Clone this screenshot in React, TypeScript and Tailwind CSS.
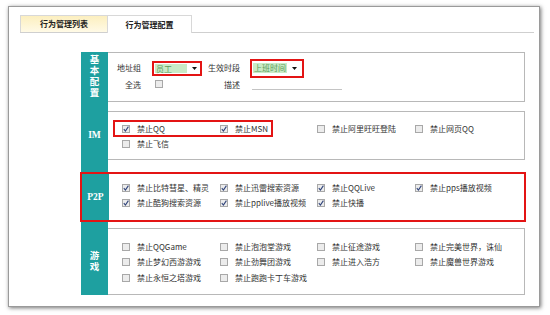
import type { ReactNode } from 'react';

const TEAL = 'bg-[#1ea0a0]';

function Box({ checked }: { checked?: boolean }) {
  return (
    <span className="relative inline-block w-[8px] h-[8px] border border-[#a8a8a8] bg-[#ececec] shrink-0">
      {checked && (
        <svg viewBox="0 0 8 8" className="absolute -left-px -top-px w-[8px] h-[8px]">
          <path d="M1.8 4.2 L3.4 6 L6.4 1.6" fill="none" stroke="#30447a" strokeWidth="1.1" />
        </svg>
      )}
    </span>
  );
}

function Arrow() {
  return (
    <svg viewBox="0 0 5 3" className="ml-[5px] w-[5px] h-[3px]">
      <path d="M0 0 H5 L2.5 3 Z" fill="#111" />
    </svg>
  );
}

function Item({ label, checked }: { label: string; checked?: boolean }) {
  return (
    <div className="flex items-center h-[15.5px]">
      <Box checked={checked} />
      <span className="ml-[7px] whitespace-nowrap">{label}</span>
    </div>
  );
}

function Label({ children }: { children: ReactNode }) {
  return (
    <div className={`w-[27px] shrink-0 ${TEAL} flex flex-col items-center justify-center text-white font-bold text-[9.5px] leading-[11px] font-['Liberation_Serif','Noto_Sans_CJK_SC',serif]`}>
      {children}
    </div>
  );
}

function Gap({ h }: { h: string }) {
  return (
    <div className={`flex ${h}`}>
      <div className={`w-[27px] ${TEAL}`} />
      <div className="flex-1" />
    </div>
  );
}

const im = [
  { label: '禁止QQ', checked: true },
  { label: '禁止MSN', checked: true },
  { label: '禁止阿里旺旺登陆' },
  { label: '禁止网页QQ' },
  { label: '禁止飞信' },
];

const p2p = [
  '禁止比特彗星、精灵',
  '禁止迅雷搜索资源',
  '禁止QQLive',
  '禁止pps播放视频',
  '禁止酷狗搜索资源',
  '禁止pplive播放视频',
  '禁止快播',
];

const games = [
  '禁止QQGame',
  '禁止泡泡堂游戏',
  '禁止征途游戏',
  '禁止完美世界，诛仙',
  '禁止梦幻西游游戏',
  '禁止劲舞团游戏',
  '禁止进入浩方',
  '禁止魔兽世界游戏',
  '禁止永恒之塔游戏',
  '禁止跑跑卡丁车游戏',
];

const cols = 'grid grid-cols-[98px_97px_98px_auto]';

export default function App() {
  return (
    <div className="w-[550px] h-[315px] bg-white pt-[6px] pl-[8px] font-['Noto_Sans_CJK_SC',sans-serif] text-[8px] text-[#333]">
      <div className="w-[532px] h-[301px] bg-white border border-[#9a9a9a] shadow-[1px_1px_4px_rgba(0,0,0,0.55)] pt-[8px] pl-[11px] pr-[5px]">
        {/* tabs */}
        <div className="flex h-[18px] border-b border-[#cfcfcf] font-bold text-[#222]">
          <div className="w-[87px] flex items-center justify-center border-t border-l border-[#d8d8d8] bg-[linear-gradient(#fcefbf,#fffae6)]">
            行为管理列表
          </div>
          <div className="w-[85px] flex items-center justify-center border-t border-r border-l border-[#d8d8d8] bg-white -mb-px">
            行为管理配置
          </div>
        </div>

        <div className="ml-[61px] mt-[19px] w-[444px] flex flex-col">
          {/* 基本配置 */}
          <div className="flex h-[50px]">
            <Label>
              <span>基</span>
              <span>本</span>
              <span>配</span>
              <span>置</span>
            </Label>
            <div className="flex-1 border-t border-r border-b border-[#b8b8b8] pt-[6px]">
              <div className="flex items-center h-[18px]">
                <span className="w-[33px] text-right">地址组</span>
                <div className="ml-[11px] w-[50px] h-[15px] border-2 border-[#e31414] flex items-center px-[1px]">
                  <span className="w-[32px] h-[9px] bg-[#c9eac6] text-[#5a9a5a] leading-[9px] pl-[1px]">员工</span>
                  <Arrow />
                </div>
                <span className="w-[38px] text-right">生效时段</span>
                <div className="ml-[10px] w-[54px] h-[19px] border-2 border-[#e31414] flex items-center px-[1px]">
                  <span className="w-[34px] h-[10px] bg-[#c9eac6] text-[#5a9a5a] leading-[10px] pl-[1px] whitespace-nowrap">上班时间</span>
                  <Arrow />
                </div>
              </div>
              <div className="flex items-center h-[15px]">
                <span className="w-[33px] text-right">全选</span>
                <span className="ml-[14px]">
                  <Box />
                </span>
                <span className="w-[77px] text-right">描述</span>
                <span className="ml-[12px] w-[90px] h-[10px] border-b border-[#c4c4c4]" />
              </div>
            </div>
          </div>

          <Gap h="h-[9px]" />

          {/* IM */}
          <div className="flex h-[49px]">
            <Label>IM</Label>
            <div className="relative flex-1 border-t border-r border-b border-[#b8b8b8] pt-[9px] pl-[14px]">
              <div className={cols}>
                {im.map(i => (
                  <Item key={i.label} label={i.label} checked={i.checked} />
                ))}
              </div>
              <div className="absolute left-[5px] top-[8px] w-[160px] h-[17px] border-2 border-[#e31414]" />
            </div>
          </div>

          <Gap h="h-[12px]" />

          {/* P2P */}
          <div className="flex h-[50px] border-2 border-[#e31414] -mx-px">
            <Label>P2P</Label>
            <div className="flex-1 pt-[6px] pl-[13px]">
              <div className={cols}>
                {p2p.map(l => (
                  <Item key={l} label={l} checked />
                ))}
              </div>
            </div>
          </div>

          <Gap h="h-[6px]" />

          {/* 游戏 */}
          <div className="flex h-[67px]">
            <Label>
              <span>游</span>
              <span>戏</span>
            </Label>
            <div className="flex-1 border-t border-r border-b border-[#b8b8b8] pt-[10px] pl-[14px]">
              <div className={cols}>
                {games.map(l => (
                  <Item key={l} label={l} />
                ))}
              </div>
            </div>
          </div>
        </div>
      </div>
    </div>
  );
}
